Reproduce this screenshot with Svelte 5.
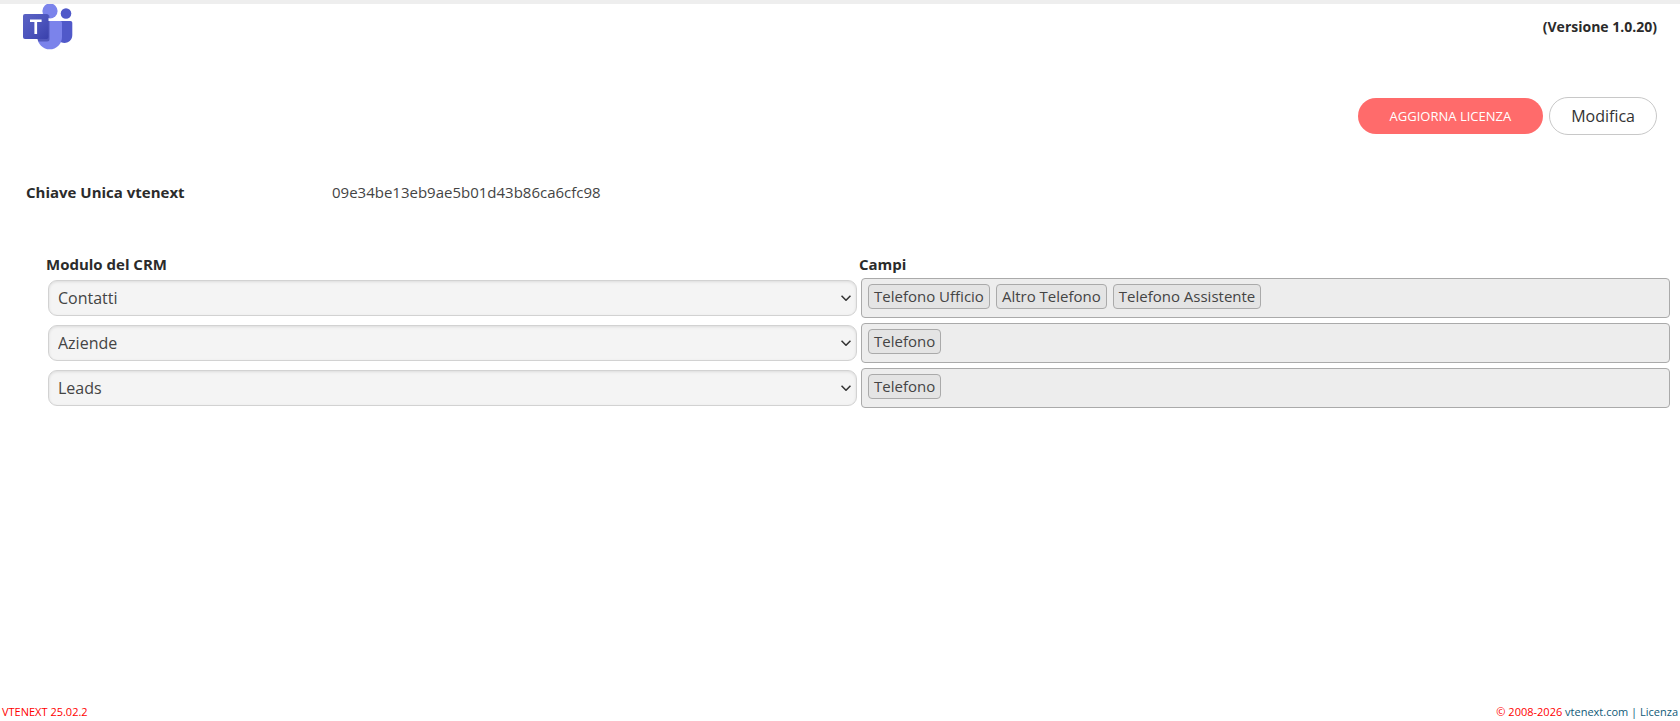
<script>
  const rows = [
    { module: 'Contatti', fields: ['Telefono Ufficio', 'Altro Telefono', 'Telefono Assistente'] },
    { module: 'Aziende', fields: ['Telefono'] },
    { module: 'Leads', fields: ['Telefono'] }
  ];
  const modules = rows.map((row) => row.module);
</script>

<div class="page">
  <header class="top">
    <svg class="logo" viewBox="0 0 50 46" role="img" aria-label="Microsoft Teams">
      <defs>
        <linearGradient id="tile" x1="0" y1="0" x2="1" y2="1">
          <stop offset="0" stop-color="#5a62c3" />
          <stop offset=".5" stop-color="#4d55bd" />
          <stop offset="1" stop-color="#3940ab" />
        </linearGradient>
        <clipPath id="body"><path d="M18 17h19.300q1.700 0 1.700 1.700v14.300a12.300 12.300 0 0 1-24.600 0V17z" /></clipPath>
      </defs>
      <circle cx="43" cy="9.500" r="5.300" fill="#5059c9" />
      <path d="M34 17h13.500q1.800 0 1.800 1.800v12.200a7.800 7.800 0 0 1-13 6z" fill="#5059c9" />
      <circle cx="27" cy="7" r="7.600" fill="#7b83eb" />
      <path d="M18 17h19.300q1.700 0 1.700 1.700v14.300a12.300 12.300 0 0 1-24.600 0V17z" fill="#7b83eb" />
      <path d="M14 17h12.500v18q0 2.500-2.500 2.500H14z" clip-path="url(#body)" fill="#353c9c" opacity=".6" />
      <path d="M20 10.400h4.500q2 0 2 2V14A7.600 7.600 0 0 1 20 10.400z" fill="#5a62c3" />
      <rect x="0" y="10" width="25.500" height="25" rx="2" fill="url(#tile)" />
      <path d="M7 15.400h11.600v2.500h-4.500V30h-2.700V17.900H7z" fill="#fff" />
    </svg>
    <strong class="version">(Versione 1.0.20)</strong>
  </header>

  <main>
    <div class="actions">
      <button type="button" class="primary">AGGIORNA LICENZA</button>
      <button type="button" class="secondary">Modifica</button>
    </div>

    <dl class="key">
      <dt>Chiave Unica vtenext</dt>
      <dd>09e34be13eb9ae5b01d43b86ca6cfc98</dd>
    </dl>

    <table>
      <thead>
        <tr>
          <th scope="col" id="col-module">Modulo del CRM</th>
          <th scope="col">Campi</th>
        </tr>
      </thead>
      <tbody>
        {#each rows as row}
          <tr>
            <td>
              <div class="pick">
                <select value={row.module} aria-labelledby="col-module">
                  {#each modules as name}
                    <option value={name}>{name}</option>
                  {/each}
                </select>
                <svg class="chevron" viewBox="0 0 10 6" aria-hidden="true">
                  <path d="M.5.700L5 5.200 9.500.700" fill="none" stroke="#333" stroke-width="1.600" />
                </svg>
              </div>
            </td>
            <td>
              <ul class="tags">
                {#each row.fields as field}
                  <li>{field}</li>
                {/each}
              </ul>
            </td>
          </tr>
        {/each}
      </tbody>
    </table>
  </main>

  <footer>
    <span>VTENEXT 25.02.2</span>
    <span>© 2008-2026 <a href="#vtenext">vtenext.com</a> <a href="#licenza">| Licenza</a></span>
  </footer>
</div>

<style>
  :global(body) {
    margin: 0;
    background: #fff;
  }
  .page {
    box-sizing: border-box;
    min-height: 100vh;
    display: flex;
    flex-direction: column;
    border-top: 4px solid #eee;
    font-family: 'Open Sans', 'Noto Sans', sans-serif;
    font-size: 15px;
    line-height: 20px;
    color: #2b2b2b;
  }
  .top {
    display: flex;
    justify-content: space-between;
    align-items: center;
    padding: 0 23px;
    height: 46px;
  }
  .logo {
    width: 50px;
    height: 46px;
  }
  .version {
    font-size: 14px;
  }
  main {
    flex: 1;
  }
  .actions {
    display: flex;
    justify-content: flex-end;
    align-items: center;
    gap: 6px;
    padding: 47px 23px 0;
  }
  button {
    font-family: inherit;
    box-sizing: border-box;
    border-radius: 20px;
    cursor: pointer;
  }
  .primary {
    height: 36px;
    padding: 0 32px;
    border: 0;
    background: #ff6b6b;
    color: #fff;
    font-size: 13px;
  }
  .secondary {
    height: 38px;
    padding: 0 21px;
    border: 1px solid #c8c8c8;
    background: #fff;
    color: #333;
    font-size: 16px;
  }
  .key {
    display: grid;
    grid-template-columns: 306px 1fr;
    margin: 47px 0 0;
    padding: 0 26px;
  }
  dt {
    font-weight: 700;
  }
  dd {
    margin: 0;
    color: #444;
  }
  table {
    width: calc(100% - 54px);
    margin: 51px 8px 0 46px;
    border-collapse: collapse;
    table-layout: fixed;
  }
  th {
    padding: 0 0 3px;
    text-align: left;
    line-height: 22px;
  }
  td {
    padding: 0 2px 5px;
  }
  .pick {
    display: grid;
    align-items: center;
  }
  select {
    grid-area: 1 / 1;
    appearance: none;
    box-sizing: border-box;
    width: 100%;
    height: 36px;
    padding: 0 30px 0 9px;
    border: 1px solid #d2d2d2;
    border-radius: 9px;
    background: #f4f4f4;
    box-shadow: inset 0 1px 3px #0000001a;
    color: #444;
    font-family: inherit;
    font-size: 16px;
  }
  .chevron {
    grid-area: 1 / 1;
    justify-self: end;
    width: 10px;
    height: 6px;
    margin-right: 6px;
    pointer-events: none;
  }
  .tags {
    box-sizing: border-box;
    display: flex;
    flex-wrap: wrap;
    gap: 6px;
    min-height: 40px;
    margin: 0;
    padding: 5px 6px 7px;
    border: 1px solid #aaa;
    border-radius: 4px;
    background: #ededed;
    list-style: none;
  }
  li {
    box-sizing: border-box;
    height: 25px;
    padding: 0 5px;
    border: 1px solid #aaa;
    border-radius: 4px;
    background: #e4e4e4;
    color: #444;
    line-height: 23px;
  }
  footer {
    display: flex;
    justify-content: space-between;
    padding: 0 2px;
    color: #f00;
    font-size: 11px;
    line-height: 18px;
  }
  a {
    color: #105a78;
    text-decoration: none;
  }
</style>
